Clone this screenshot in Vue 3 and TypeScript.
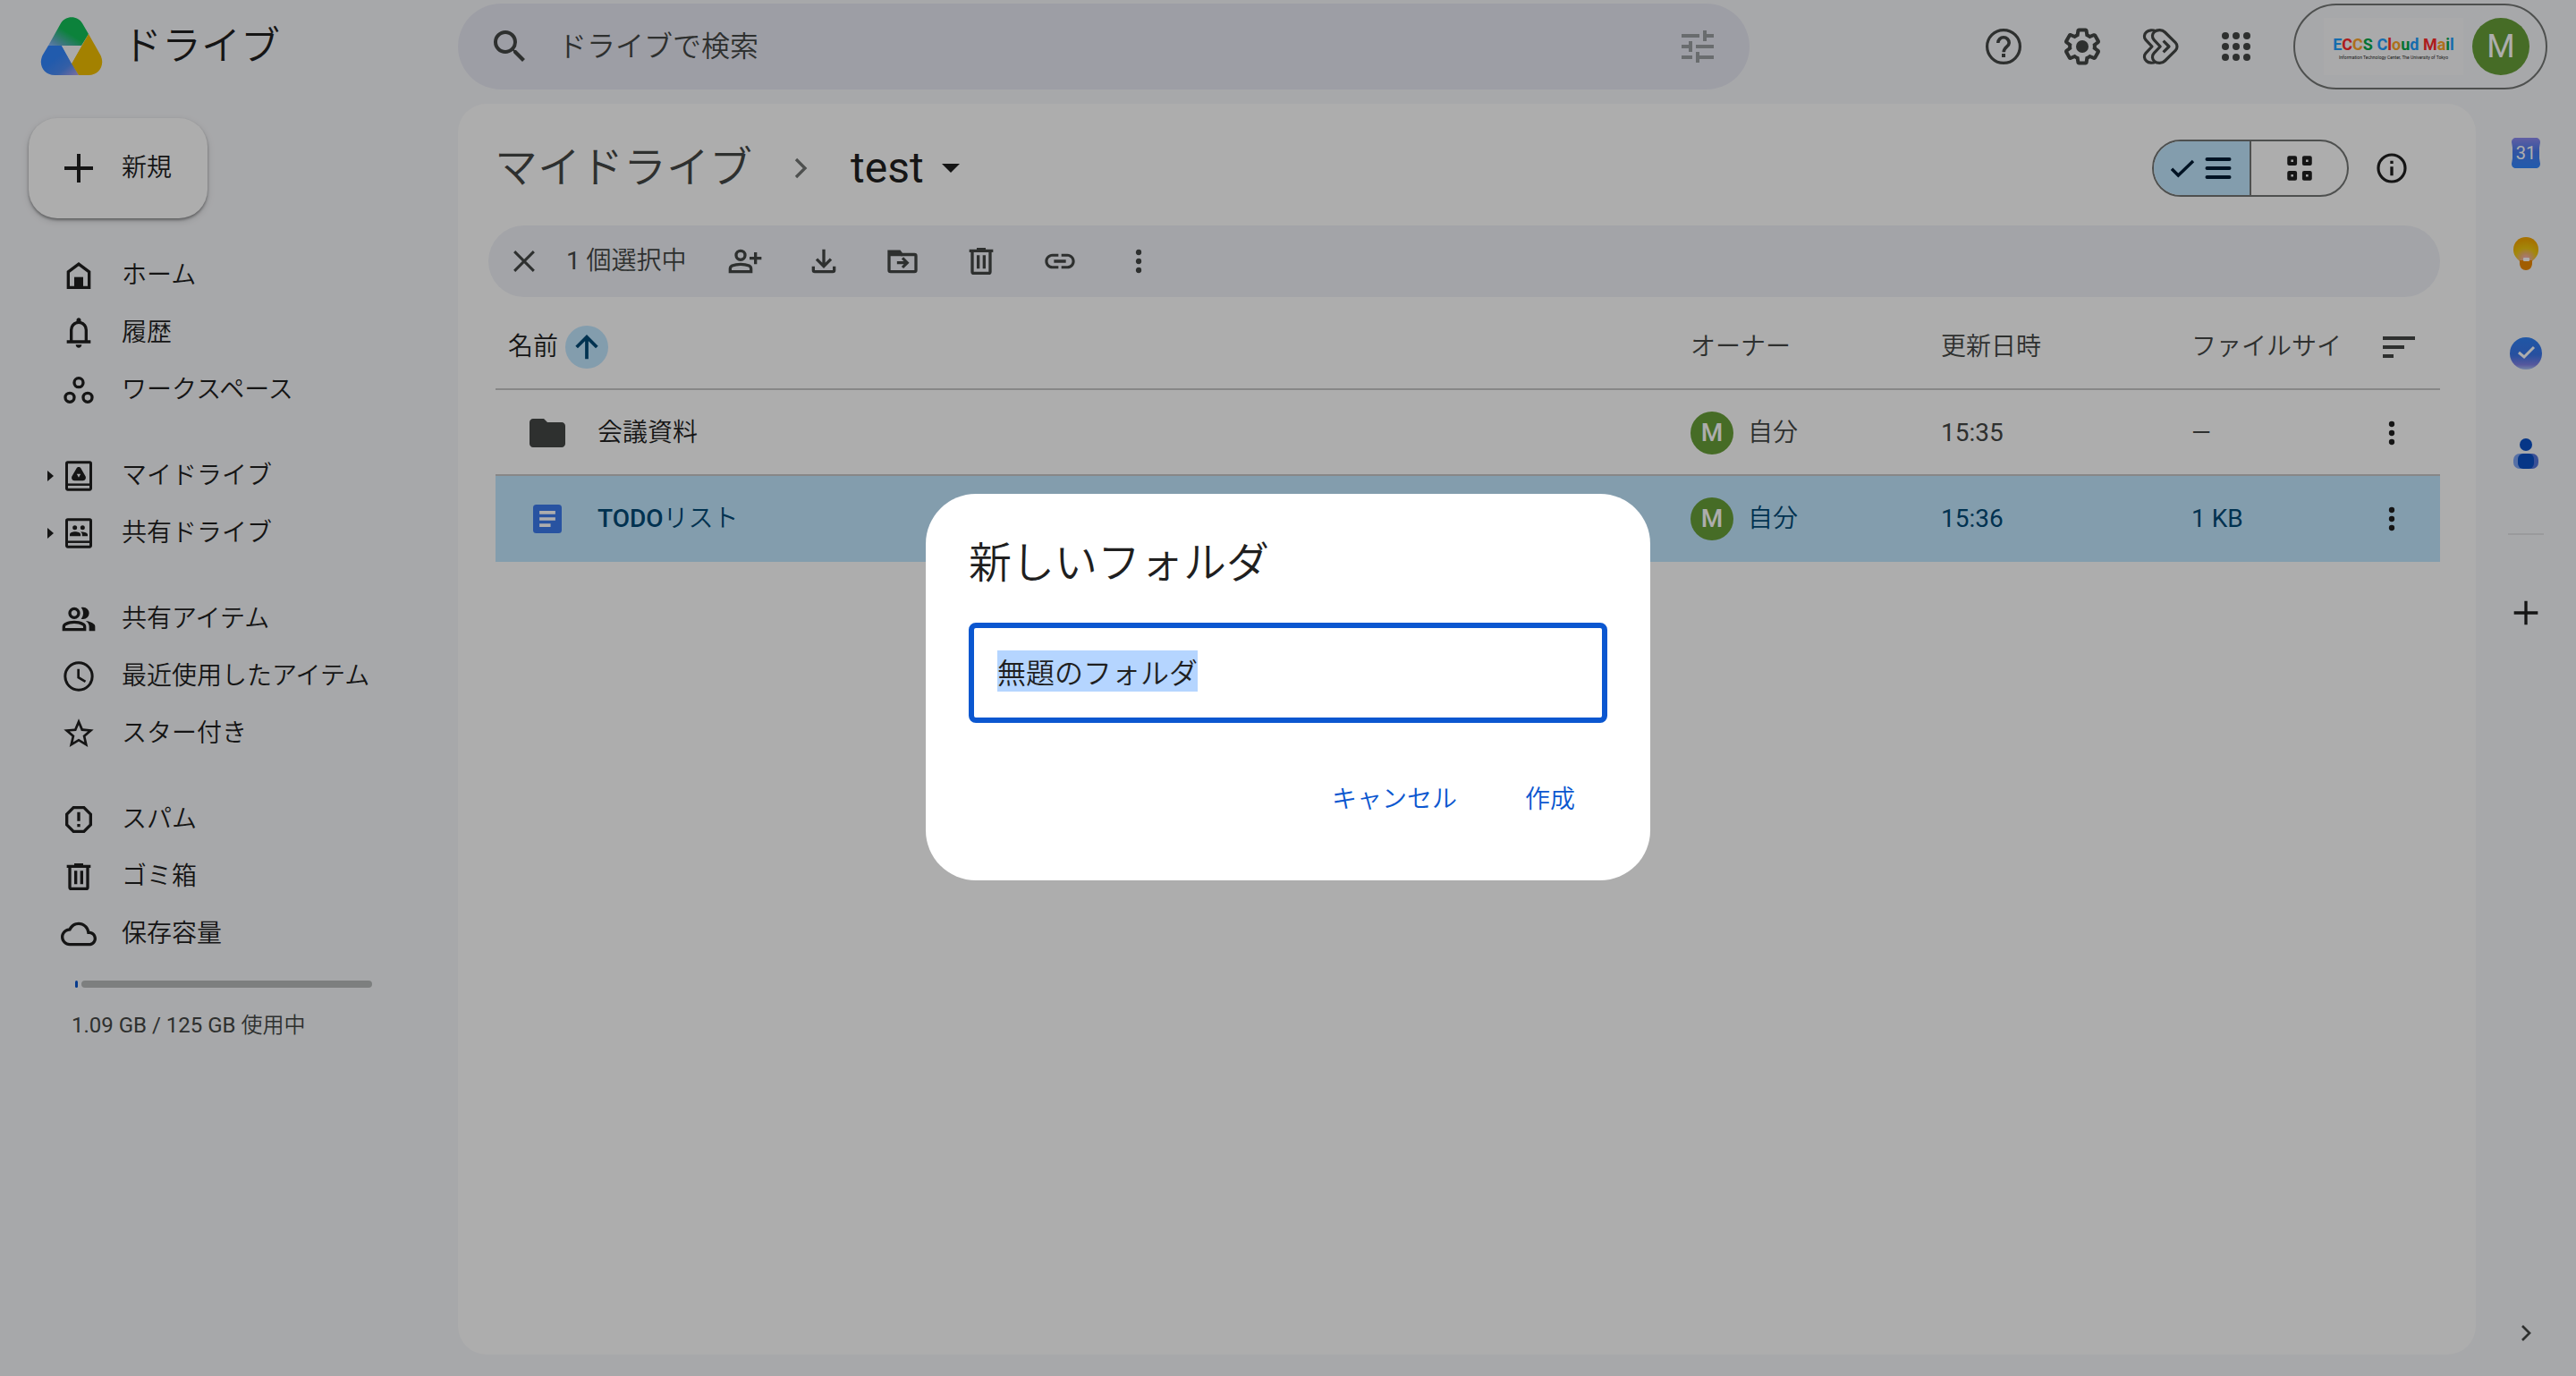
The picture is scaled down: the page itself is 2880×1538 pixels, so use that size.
<script setup lang="ts">
import { onMounted, ref } from 'vue'

interface NavItem {
  label: string
  icon: string
  expandable?: boolean
}

interface FileRow {
  name: string
  kind: 'folder' | 'doc'
  owner: string
  modified: string
  size: string
  selected: boolean
}

const line = 'fill="none" stroke="currentColor"'

const icons: Record<string, string> = {
  plus: '<path d="M12 4v16M4 12h16" fill="none" stroke="currentColor" stroke-width="2"/>',
  home: `<path d="M5 20V9.500l7-5.250 7 5.250V20Z" ${line} stroke-width="2"/><path d="M9 13h6v7H9z"/>`,
  bell: '<path d="M4 19v-2h2v-7q0-2.075 1.250-3.687Q8.500 4.700 10.500 4.200v-.7q0-.625.438-1.062Q11.375 2 12 2t1.063.438q.437.437.437 1.062v.7q2 .5 3.250 2.113Q18 7.925 18 10v7h2v2Zm8 3q-.825 0-1.412-.587Q10 20.825 10 20h4q0 .825-.587 1.413Q12.825 22 12 22Zm-4-5h8v-7q0-1.650-1.175-2.825Q13.650 6 12 6q-1.650 0-2.825 1.175Q8 8.350 8 10Z"/>',
  workspaces: `<g ${line} stroke-width="2"><circle cx="12" cy="7" r="3"/><circle cx="6" cy="17" r="3"/><circle cx="18" cy="17" r="3"/></g>`,
  myDrive: `<rect x="3.900" y="2.900" width="16.200" height="18.200" rx=".8" ${line} stroke-width="1.800"/><path d="M3.500 17.800h17" ${line} stroke-width="1.500"/><path fill-rule="evenodd" d="M10.600 6.800c.6-1.100 2.200-1.100 2.800 0l3.100 5.400c.7 1.300-.1 3-1.600 3H9.100c-1.500 0-2.300-1.700-1.600-3ZM10.700 10.700l1.300 2.400 1.300-2.400Z"/>`,
  sharedDrive: `<rect x="3.900" y="2.900" width="16.200" height="18.200" rx=".8" ${line} stroke-width="1.800"/><path d="M3.500 17.800h17" ${line} stroke-width="1.500"/><circle cx="9.400" cy="8.200" r="1.500"/><circle cx="14.600" cy="8.200" r="1.500"/><path d="M6 13.900v-1c0-1.200 2-1.900 3.600-1.900s3.700.7 3.700 1.900v1ZM14.300 13.900v-1c0-.8-.5-1.400-1.200-1.800 1.900-.3 4.900.4 4.900 1.800v1Z"/>`,
  group: '<path d="M1 20v-2.800q0-.85.438-1.563Q1.875 14.925 2.600 14.550q1.550-.775 3.150-1.163Q7.350 13 9 13t3.250.387q1.600.388 3.150 1.163.725.375 1.163 1.087Q17 16.350 17 17.200V20Zm18 0v-3q0-1.100-.613-2.113-.612-1.012-1.737-1.737 1.275.15 2.400.512 1.125.363 2.100.888.9.5 1.375 1.112Q23 16.275 23 17v3ZM9 12q-1.650 0-2.825-1.175Q5 9.650 5 8q0-1.650 1.175-2.825Q7.350 4 9 4q1.650 0 2.825 1.175Q13 6.350 13 8q0 1.650-1.175 2.825Q10.650 12 9 12Zm10-4q0 1.650-1.175 2.825Q16.650 12 15 12q-.275 0-.7-.062-.425-.063-.7-.138.675-.8 1.037-1.775Q15 9.050 15 8q0-1.050-.363-2.025Q14.275 5 13.600 4.200q.35-.125.7-.163Q14.650 4 15 4q1.650 0 2.825 1.175Q19 6.350 19 8ZM3 18h12v-.8q0-.275-.137-.5-.138-.225-.363-.35-1.350-.675-2.725-1.013Q10.400 15 9 15t-2.775.337Q4.850 15.675 3.500 16.350q-.225.125-.362.35-.138.225-.138.5Zm6-8q.825 0 1.413-.588Q11 8.825 11 8t-.587-1.412Q9.825 6 9 6q-.825 0-1.412.588Q7 7.175 7 8t.588 1.412Q8.175 10 9 10Z"/>',
  clock: `<circle cx="12" cy="12" r="9.100" ${line} stroke-width="1.800"/><path d="M11.800 7v5.700l4.700 2.800" ${line} stroke-width="1.600"/>`,
  star: '<path d="m22 9.240-7.190-.62L12 2 9.190 8.630 2 9.240l5.460 4.730L5.820 21 12 17.270 18.180 21l-1.630-7.030L22 9.240zM12 15.400l-3.760 2.270 1-4.280-3.320-2.880 4.380-.38L12 6.100l1.710 4.040 4.380.38-3.320 2.880 1 4.280L12 15.400z"/>',
  spam: `<path d="M8.500 4h7L20 8.500v7L15.500 20h-7L4 15.500v-7Z" ${line} stroke-width="2"/><path d="M11 7h2v6h-2zM11 15h2v2h-2z"/>`,
  trash: `<path d="M4 4h5V3h6v1h5v2H4z"/><path d="M6 5.500V19c0 .6.400 1 1 1h10c.6 0 1-.4 1-1V5.500" ${line} stroke-width="2"/><path d="M9 8h2v9H9zM13 8h2v9h-2z"/>`,
  cloud: '<path d="M19.350 10.040C18.670 6.590 15.640 4 12 4 9.110 4 6.600 5.640 5.350 8.040 2.340 8.360 0 10.910 0 14c0 3.310 2.690 6 6 6h13c2.760 0 5-2.240 5-5 0-2.640-2.050-4.780-4.650-4.960zM19 18H6c-2.210 0-4-1.790-4-4 0-2.050 1.530-3.760 3.560-3.970l1.070-.11.5-.95C8.080 7.140 9.940 6 12 6c2.620 0 4.880 1.860 5.390 4.430l.3 1.500 1.530.11c1.560.1 2.780 1.410 2.780 2.960 0 1.650-1.350 3-3 3z"/>',
  search: '<path d="M15.500 14h-.79l-.28-.27A6.471 6.471 0 0 0 16 9.500 6.500 6.500 0 1 0 9.500 16c1.610 0 3.090-.59 4.230-1.570l.27.28v.79l5 4.990L20.490 19l-4.990-5zm-6 0C7.010 14 5 11.990 5 9.500S7.010 5 9.500 5 14 7.010 14 9.500 11.990 14 9.500 14z"/>',
  tune: '<path d="M3 17v2h6v-2H3zM3 5v2h10V5H3zm10 16v-2h8v-2h-8v-2h-2v6h2zM7 9v2H3v2h4v2h2V9H7zm14 4v-2H11v2h10zm-6-4h2V7h4V5h-4V3h-2v6z"/>',
  help: `<circle cx="12" cy="12" r="9.200" ${line} stroke-width="1.600"/><path d="M8.900 10a3.100 3.100 0 1 1 6.200 0c0 2-3 2.200-3 5.100" ${line} stroke-width="1.800"/><path d="M11 16h2v2h-2z"/>`,
  settings: '<path d="M13.850 22.250h-3.700c-.74 0-1.360-.54-1.450-1.270l-.27-1.890c-.27-.14-.53-.29-.79-.46l-1.800.72c-.7.26-1.470-.03-1.810-.65L2.200 15.530c-.35-.66-.2-1.440.36-1.880l1.530-1.190c-.01-.15-.02-.3-.02-.46 0-.15.010-.31.020-.46l-1.520-1.190c-.59-.45-.74-1.260-.37-1.880l1.850-3.190c.34-.62 1.110-.9 1.790-.63l1.810.73c.26-.17.52-.32.78-.46l.27-1.910c.09-.7.71-1.250 1.440-1.250h3.700c.74 0 1.360.54 1.450 1.270l.27 1.890c.27.14.53.29.79.46l1.800-.72c.71-.26 1.480.03 1.820.65l1.840 3.180c.36.66.2 1.440-.36 1.880l-1.520 1.190c.01.15.02.3.02.46s-.01.31-.02.46l1.520 1.190c.56.45.72 1.230.37 1.860l-1.860 3.220c-.34.62-1.110.9-1.800.63l-1.800-.72c-.26.17-.52.32-.78.46l-.27 1.910c-.1.68-.72 1.220-1.460 1.220zm-3.230-2h2.760l.37-2.550.53-.22c.44-.18.88-.44 1.340-.78l.45-.34 2.380.96 1.380-2.400-2.030-1.580.07-.56c.03-.26.06-.51.06-.78s-.03-.53-.06-.78l-.07-.56 2.030-1.580-1.390-2.400-2.390.96-.45-.35c-.42-.32-.87-.58-1.330-.77l-.52-.22-.37-2.550h-2.760l-.37 2.550-.53.21c-.44.19-.88.44-1.340.79l-.45.33-2.380-.95-1.390 2.390 2.030 1.580-.07.56a7 7 0 0 0-.06.79c0 .26.020.53.060.78l.07.56-2.030 1.580 1.380 2.400 2.390-.96.45.35c.43.33.86.58 1.330.77l.53.22.38 2.550z"/><circle cx="12" cy="12" r="3.500"/>',
  spark: `<g ${line} stroke-width="1.600" stroke-linejoin="round"><path d="M9 3.400C7.500 2.600 5.200 2.700 3.900 3.900 2.500 5.100 2.300 7 3.500 8.300L7 12l-3.500 3.700c-1.200 1.300-1 3.200.4 4.400 1.300 1.200 3.600 1.300 5.100.5"/><path d="M8.100 8.300C6.800 6.900 7 4.900 8.300 3.800 10 2.400 12.700 2.500 14.200 4l5.900 5.800c1.200 1.200 1.200 3.200 0 4.400L14.200 20c-1.500 1.500-4.200 1.600-5.900.2C7 19.100 6.800 17.100 8.100 15.700L11.600 12Z"/><path d="m13.300 8.800 3.200 3.200-3.200 3.200"/></g>`,
  apps: '<circle cx="6" cy="6" r="2"/><circle cx="12" cy="6" r="2"/><circle cx="18" cy="6" r="2"/><circle cx="6" cy="12" r="2"/><circle cx="12" cy="12" r="2"/><circle cx="18" cy="12" r="2"/><circle cx="6" cy="18" r="2"/><circle cx="12" cy="18" r="2"/><circle cx="18" cy="18" r="2"/>',
  check: `<path d="M3 12.500l5.500 5.500L21 6" ${line} stroke-width="2.600"/>`,
  list: `<path d="M4.500 6h15M4.500 12h15M4.500 18h15" ${line} stroke-width="2.400" stroke-linecap="round"/>`,
  grid: `<g ${line} stroke-width="2.500" stroke-linejoin="round"><path d="M5 5h4v4H5zM15 5h4v4h-4zM5 15h4v4H5zM15 15h4v4h-4z"/></g>`,
  info: `<circle cx="12" cy="12" r="9" ${line} stroke-width="1.900"/><path d="M11 11h2v6h-2zM11 7h2v2h-2z"/>`,
  close: `<path d="m5.500 5.500 13 13M18.500 5.500l-13 13" ${line} stroke-width="1.800"/>`,
  personAdd: `<g ${line} stroke-width="2"><circle cx="9" cy="8" r="3"/><path d="M2 19v-1.900c0-.9.500-1.700 1.300-2.100C5 14.300 7 14 9 14s4 .3 5.700 1c.8.400 1.300 1.200 1.300 2.100V19Z"/><path d="M19 6v8M15 10h8"/></g>`,
  download: `<g ${line} stroke-width="2"><path d="M12 4v11M7.200 10.600l4.800 4.800 4.800-4.800"/><path d="M5 15.500V18c0 .6.400 1 1 1h12c.6 0 1-.4 1-1v-2.500"/></g>`,
  move: `<path d="M3 5.500h7l1.500 2H20c.6 0 1 .4 1 1V18c0 .6-.4 1-1 1H4c-.6 0-1-.4-1-1Z" ${line} stroke-width="2"/><path d="M3 5h6.500L12 8.500H3z"/><path d="M8.300 13h6M12 9.800l3.200 3.200-3.200 3.200" ${line} stroke-width="1.900"/>`,
  link: '<path d="M17 7h-4v1.900h4c1.710 0 3.100 1.390 3.100 3.100s-1.390 3.100-3.100 3.100h-4V17h4c2.760 0 5-2.240 5-5s-2.240-5-5-5zM3.900 12c0-1.710 1.390-3.100 3.100-3.100h4V7H7c-2.760 0-5 2.240-5 5s2.240 5 5 5h4v-1.900H7c-1.710 0-3.100-1.390-3.100-3.100zM8 11h8v2H8z"/>',
  more: '<circle cx="12" cy="6" r="1.900"/><circle cx="12" cy="12" r="1.900"/><circle cx="12" cy="18" r="1.900"/>',
  arrowUp: `<path d="M12 22V3.500M3.500 12 12 3.500l8.500 8.500" ${line} stroke-width="2.800"/>`,
  sort: '<path d="M3 6h18v2H3zM3 11h12v2H3zM3 16h6v2H3z"/>',
  chevron: `<path d="m9 6 6 6-6 6" ${line} stroke-width="2"/>`,
  folder: '<path d="M10 4H4c-1.100 0-2 .9-2 2v12c0 1.100.9 2 2 2h16c1.100 0 2-.9 2-2V8c0-1.100-.9-2-2-2h-8l-2-2z"/>',
  doc: '<rect x="3" y="3" width="18" height="18" rx="2" fill="#3c7bee"/><path d="M7 7h10v2H7zM7 11h10v2H7zM7 15h7v2H7z" fill="#fff"/>',
}

const navGroups: NavItem[][] = [
  [
    { label: 'ホーム', icon: 'home' },
    { label: '履歴', icon: 'bell' },
    { label: 'ワークスペース', icon: 'workspaces' },
  ],
  [
    { label: 'マイドライブ', icon: 'myDrive', expandable: true },
    { label: '共有ドライブ', icon: 'sharedDrive', expandable: true },
  ],
  [
    { label: '共有アイテム', icon: 'group' },
    { label: '最近使用したアイテム', icon: 'clock' },
    { label: 'スター付き', icon: 'star' },
  ],
  [
    { label: 'スパム', icon: 'spam' },
    { label: 'ゴミ箱', icon: 'trash' },
    { label: '保存容量', icon: 'cloud' },
  ],
]

const headerActions = [
  { icon: 'help', label: 'サポート' },
  { icon: 'settings', label: '設定' },
  { icon: 'spark', label: 'Gemini' },
]

const selectionActions = [
  { icon: 'personAdd', label: '共有' },
  { icon: 'download', label: 'ダウンロード' },
  { icon: 'move', label: '移動' },
  { icon: 'trash', label: '削除' },
  { icon: 'link', label: 'リンクをコピー' },
  { icon: 'more', label: 'その他の操作' },
]

const files: FileRow[] = [
  { name: '会議資料', kind: 'folder', owner: '自分', modified: '15:35', size: '—', selected: false },
  { name: 'TODOリスト', kind: 'doc', owner: '自分', modified: '15:36', size: '1 KB', selected: true },
]

const brandLetters = [
  ['E', '#1fa0ff'], ['C', '#ff2a2a'], ['C', '#ffa62a'], ['S', '#00a84a'], [' ', '#000'],
  ['C', '#1fa0ff'], ['l', '#ff2a2a'], ['o', '#ffa62a'], ['u', '#00a84a'], ['d', '#1fa0ff'], [' ', '#000'],
  ['M', '#ff2a2a'], ['a', '#ffa62a'], ['i', '#00a84a'], ['l', '#1fa0ff'],
]

/** Splits a file name into runs so that Latin runs can take their own weight. */
function runs(name: string): { text: string; latin: boolean }[] {
  return (name.match(/[\x20-\x7e]+|[^\x20-\x7e]+/g) ?? []).map((text) => ({
    text,
    latin: /^[\x20-\x7e]/.test(text),
  }))
}

const folderName = ref('無題のフォルダ')
const nameInput = ref<HTMLInputElement | null>(null)

onMounted(() => {
  nameInput.value?.focus()
  nameInput.value?.select()
})
</script>

<template>
  <div class="app">
    <header class="topbar">
      <a class="brand" href="#">
        <svg class="logo" viewBox="0 0 70 66" aria-hidden="true">
          <defs>
            <linearGradient id="lg-green" x1="0" y1="1" x2=".45" y2=".5">
              <stop offset="0" stop-color="#8ab9ff" />
              <stop offset=".3" stop-color="#6aaed0" />
              <stop offset="1" stop-color="#12c058" />
            </linearGradient>
            <linearGradient id="lg-blue" x1=".4" y1=".4" x2="1" y2="1">
              <stop offset="0" stop-color="#3186ff" />
              <stop offset=".5" stop-color="#4d8cf5" />
              <stop offset="1" stop-color="#b9a4ea" />
            </linearGradient>
          </defs>
          <path d="M9 32 23 7c5-9 19-9 24 0l7 12-8 13Z" fill="url(#lg-green)" />
          <path d="M9 32h15l19 33H16C4 65-3 53 3 42Z" fill="url(#lg-blue)" />
          <path d="M54 19 67 42c6 11-1 23-13 23H43l-8-13Z" fill="#f0be00" />
          <path d="M24 32h22L35 52Z" fill="#fbfbfd" />
        </svg>
        <span class="brand-name">ドライブ</span>
      </a>

      <div class="top-main">
        <form class="search" @submit.prevent>
          <svg class="icon-lg" viewBox="0 0 24 24" v-html="icons.search" />
          <input type="search" placeholder="ドライブで検索" aria-label="ドライブで検索" />
          <button type="button" class="bare tune" aria-label="検索オプション">
            <svg class="icon-lg" viewBox="0 0 24 24" v-html="icons.tune" />
          </button>
        </form>
        <div class="top-actions">
          <button v-for="a in headerActions" :key="a.icon" type="button" class="bare" :aria-label="a.label">
            <svg class="icon-lg" viewBox="0 0 24 24" v-html="icons[a.icon]" />
          </button>
          <button type="button" class="bare apps" aria-label="アプリ">
            <svg class="icon-lg" viewBox="0 0 24 24" v-html="icons.apps" />
          </button>
          <button type="button" class="account">
            <span class="org">
              <span class="org-name"><span v-for="(l, i) in brandLetters" :key="i" :style="{ color: l[1] }">{{ l[0] }}</span></span>
              <span class="org-sub">Information Technology Center, The University of Tokyo</span>
            </span>
            <span class="avatar avatar-lg">M</span>
          </button>
        </div>
      </div>
    </header>

    <div class="body">
      <aside class="sidebar">
        <button type="button" class="new-btn">
          <svg class="icon-lg" viewBox="0 0 24 24" v-html="icons.plus" />
          <span>新規</span>
        </button>
        <nav>
          <ul v-for="(group, gi) in navGroups" :key="gi">
            <li v-for="item in group" :key="item.label">
              <a href="#">
                <span class="twisty" :class="{ on: item.expandable }" />
                <svg class="icon" viewBox="0 0 24 24" v-html="icons[item.icon]" />
                <span>{{ item.label }}</span>
              </a>
            </li>
          </ul>
        </nav>
        <div class="quota">
          <div class="meter"><i class="used" /><i class="free" /></div>
          <p><span class="latin">1.09 GB / 125 GB</span> 使用中</p>
        </div>
      </aside>

      <main class="panel">
        <div class="crumb-row">
          <nav class="crumbs" aria-label="パンくずリスト">
            <a href="#">マイドライブ</a>
            <svg class="icon crumb-sep" viewBox="0 0 24 24" v-html="icons.chevron" />
            <button type="button" class="bare current">test<span class="caret" /></button>
          </nav>
          <div class="view">
            <div class="toggle">
              <button type="button" class="bare seg on" aria-label="リスト レイアウト">
                <svg class="icon-sm" viewBox="0 0 24 24" v-html="icons.check" />
                <svg class="icon" viewBox="0 0 24 24" v-html="icons.list" />
              </button>
              <button type="button" class="bare seg" aria-label="グリッド レイアウト">
                <svg class="icon" viewBox="0 0 24 24" v-html="icons.grid" />
              </button>
            </div>
            <button type="button" class="bare info" aria-label="詳細を表示">
              <svg class="icon" viewBox="0 0 24 24" v-html="icons.info" />
            </button>
          </div>
        </div>

        <div class="selection" role="toolbar" aria-label="選択項目の操作">
          <button type="button" class="bare" aria-label="選択を解除">
            <svg class="icon" viewBox="0 0 24 24" v-html="icons.close" />
          </button>
          <span class="count"><span class="latin">1</span> 個選択中</span>
          <button v-for="a in selectionActions" :key="a.icon" type="button" class="bare action" :aria-label="a.label">
            <svg class="icon" viewBox="0 0 24 24" v-html="icons[a.icon]" />
          </button>
        </div>

        <table class="files">
          <colgroup>
            <col /><col class="c-mid" /><col class="c-mid" /><col class="c-size" /><col class="c-act" />
          </colgroup>
          <thead>
            <tr>
              <th class="h-name">
                <span class="cell">
                  名前
                  <button type="button" class="bare sort-dir" aria-label="昇順">
                    <svg class="icon-sm" viewBox="0 0 24 24" v-html="icons.arrowUp" />
                  </button>
                </span>
              </th>
              <th>オーナー</th>
              <th>更新日時</th>
              <th>ファイルサイ</th>
              <th class="h-sort">
                <button type="button" class="bare" aria-label="並べ替え">
                  <svg class="icon-lg" viewBox="0 0 24 24" v-html="icons.sort" />
                </button>
              </th>
            </tr>
          </thead>
          <tbody>
            <tr v-for="f in files" :key="f.name" :class="{ selected: f.selected }">
              <td class="t-name">
                <span class="cell">
                  <svg v-if="f.kind === 'folder'" class="icon-lg folder" viewBox="0 0 24 24" v-html="icons.folder" />
                  <svg v-else class="icon-doc" viewBox="3 3 18 18" v-html="icons.doc" />
                  <span><span v-for="r in runs(f.name)" :key="r.text" :class="{ strong: r.latin }">{{ r.text }}</span></span>
                </span>
              </td>
              <td>
                <span class="cell owner"><span class="avatar">M</span>{{ f.owner }}</span>
              </td>
              <td class="latin">{{ f.modified }}</td>
              <td class="latin">{{ f.size }}</td>
              <td class="t-more">
                <button type="button" class="bare" aria-label="その他の操作">
                  <svg class="icon" viewBox="0 0 24 24" v-html="icons.more" />
                </button>
              </td>
            </tr>
          </tbody>
        </table>
      </main>

      <aside class="rail">
        <button type="button" class="bare" aria-label="カレンダー">
          <svg class="icon" viewBox="0 0 40 40">
            <defs>
              <linearGradient id="cal" x1="0" y1="0" x2="0" y2="1">
                <stop offset="0" stop-color="#8f8cf0" />
                <stop offset=".45" stop-color="#4a7df0" />
                <stop offset="1" stop-color="#3186ff" />
              </linearGradient>
            </defs>
            <path d="M9 3h22c3 0 5 2 5 5l-1 6v12l1 6c0 3-2 5-5 5H9c-3 0-5-2-5-5l1-6V14L4 8c0-3 2-5 5-5Z" fill="url(#cal)" />
            <text x="20" y="27" text-anchor="middle" font-family="Roboto" font-size="20" font-weight="400" fill="#fff">31</text>
          </svg>
        </button>
        <button type="button" class="bare" aria-label="Keep">
          <svg class="icon" viewBox="0 0 40 40">
            <defs>
              <radialGradient id="keep" cx=".5" cy=".9" r=".8">
                <stop offset="0" stop-color="#ffb0c8" />
                <stop offset=".3" stop-color="#f0b76a" />
                <stop offset=".55" stop-color="#f0c810" />
                <stop offset="1" stop-color="#f5a800" />
              </radialGradient>
            </defs>
            <path d="M20 2c8 0 14 6 14 14 0 6-3 9-7 13H13c-4-4-7-7-7-13C6 8 12 2 20 2Z" fill="url(#keep)" />
            <path d="M13 28h14v3c0 5-3 8-7 8s-7-3-7-8Z" fill="#ee8a00" />
            <rect x="17" y="25" width="7" height="4" rx="1" fill="#fff" />
          </svg>
        </button>
        <button type="button" class="bare" aria-label="ToDo リスト">
          <svg class="icon" viewBox="0 0 40 40">
            <defs>
              <linearGradient id="task" x1="0" y1="0" x2="0" y2="1">
                <stop offset="0" stop-color="#2f80f5" />
                <stop offset=".55" stop-color="#3a76ea" />
                <stop offset=".85" stop-color="#7f82e8" />
                <stop offset="1" stop-color="#a9c4f5" />
              </linearGradient>
            </defs>
            <circle cx="20" cy="20" r="18" fill="url(#task)" />
            <path d="m12 19 6 5 11-11" fill="none" stroke="#fff" stroke-width="3" />
          </svg>
        </button>
        <button type="button" class="bare" aria-label="連絡先">
          <svg class="icon" viewBox="0 0 40 40">
            <rect x="6" y="20" width="20" height="17" rx="7" fill="#7fa6f5" />
            <rect x="16" y="20" width="18" height="17" rx="7" fill="#5576dd" />
            <rect x="11" y="20" width="18" height="17" rx="6" fill="#0a50c8" />
            <circle cx="20" cy="10" r="7" fill="#0a50c8" />
          </svg>
        </button>
        <hr />
        <button type="button" class="bare add" aria-label="アドオンを取得">
          <svg class="icon" viewBox="0 0 24 24" v-html="icons.plus" />
        </button>
        <button type="button" class="bare hide" aria-label="サイドパネルを非表示">
          <svg class="icon-sm" viewBox="0 0 24 24" v-html="icons.chevron" />
        </button>
      </aside>
    </div>

    <div class="scrim">
      <form class="dialog" role="dialog" aria-modal="true" aria-labelledby="dialog-title" @submit.prevent>
        <h1 id="dialog-title">新しいフォルダ</h1>
        <input ref="nameInput" v-model="folderName" type="text" aria-labelledby="dialog-title" />
        <div class="dialog-actions">
          <button type="button">キャンセル</button>
          <button type="submit">作成</button>
        </div>
      </form>
    </div>
  </div>
</template>

<style>
body {
  margin: 0;
  background: #f7f8fb;
}
</style>

<style scoped>
.app,
.app button,
.app input {
  font-family: Roboto, 'Noto Sans CJK JP', sans-serif;
  font-weight: 350;
}
.app button {
  line-height: 40px;
}
.app {
  display: flex;
  flex-direction: column;
  min-height: 100vh;
  font-size: 28px;
  line-height: 40px;
  color: #1f1f1f;
  background: #f7f8fb;
}
.app *,
.app {
  box-sizing: border-box;
}
a {
  color: inherit;
  text-decoration: none;
}
svg {
  display: block;
  flex: none;
  fill: currentColor;
}
.icon-sm {
  width: 32px;
  height: 32px;
}
.icon-doc {
  width: 32px;
  height: 32px;
}
.icon {
  width: 40px;
  height: 40px;
}
.icon-lg {
  width: 48px;
  height: 48px;
}
.bare {
  display: flex;
  align-items: center;
  justify-content: center;
  padding: 0;
  border: 0;
  background: none;
  color: inherit;
  font-size: inherit;
}
.latin {
  font-weight: 400;
}
.strong {
  font-weight: 500;
}

/* Top bar */
.topbar {
  display: flex;
  height: 116px;
  padding: 4px 32px 16px 0;
}
.brand {
  display: flex;
  flex: none;
  align-items: center;
  gap: 22px;
  width: 512px;
  padding-left: 45px;
}
.logo {
  width: 70px;
  height: 66px;
}
.brand-name {
  font-size: 44px;
  line-height: 60px;
}
.top-main {
  display: flex;
  flex: 1;
  align-items: center;
  justify-content: space-between;
  gap: 40px;
}
.search {
  display: flex;
  flex: 0 1 1444px;
  align-items: center;
  height: 96px;
  padding: 0 34px;
  border-radius: 48px;
  background: #e8e9f4;
  color: #444746;
}
.search input {
  flex: 1;
  min-width: 0;
  height: 64px;
  padding: 0 30px;
  border: 0;
  outline: 0;
  background: none;
  font-size: 32px;
}
.search input::placeholder {
  color: #444746;
}
.tune {
  color: #9b9fa2;
}
.top-actions {
  display: flex;
  align-items: center;
  gap: 40px;
  color: #444746;
}
.apps {
  margin-left: -4px;
}
.account {
  display: flex;
  align-items: center;
  justify-content: flex-end;
  gap: 10px;
  width: 284px;
  height: 96px;
  padding: 0 18px;
  border: 2px solid #747775;
  border-radius: 48px;
  background: none;
}
.org {
  display: flex;
  flex-direction: column;
  align-items: center;
  justify-content: center;
  width: 156px;
  height: 64px;
  padding-top: 4px;
  background: #fbfbfd;
}
.org-name {
  font-size: 18px;
  font-weight: 700;
  line-height: 20px;
  white-space: pre;
}
.org-name span {
  font-weight: 700;
}
.org-sub {
  font-size: 5px;
  font-weight: 400;
  line-height: 8px;
  color: #1f1f1f;
  white-space: nowrap;
}
.avatar {
  display: flex;
  flex: none;
  align-items: center;
  justify-content: center;
  width: 48px;
  height: 48px;
  border-radius: 50%;
  background: #689f38;
  color: #fff;
  font-size: 28px;
  font-weight: 500;
}
.avatar-lg {
  width: 64px;
  height: 64px;
  font-size: 36px;
  font-weight: 400;
}

/* Body columns */
.body {
  display: flex;
  flex: 1;
  padding-bottom: 24px;
}
.sidebar {
  flex: none;
  width: 512px;
  padding-top: 16px;
}
.new-btn {
  display: flex;
  align-items: center;
  gap: 24px;
  height: 112px;
  margin-left: 32px;
  padding: 0 40px 0 32px;
  border: 0;
  border-radius: 32px;
  background: #fff;
  box-shadow: 0 2px 3px rgba(0, 0, 0, 0.35), 0 3px 8px rgba(0, 0, 0, 0.15);
  color: #1f1f1f;
  font-size: 28px;
}
.sidebar ul {
  margin: 0;
  padding: 32px 0 0;
  list-style: none;
}
.sidebar li a {
  display: flex;
  align-items: center;
  height: 64px;
  padding-left: 53px;
}
.sidebar li .icon {
  margin-right: 28px;
}
.twisty {
  width: 15px;
}
.twisty.on::before {
  content: '';
  display: block;
  width: 0;
  border: 6px solid transparent;
  border-left: 7px solid #1f1f1f;
  border-right: 0;
}
.quota {
  padding: 20px 96px 0 80px;
}
.meter {
  display: flex;
  gap: 4px;
  padding-left: 4px;
}
.meter i {
  height: 8px;
  border-radius: 4px;
}
.used {
  width: 3px;
  background: #0b57d0;
}
.free {
  flex: 1;
  background: #b8bcbb;
}
.quota p {
  margin: 22px 0 0;
  font-size: 24px;
  color: #444746;
}

/* File panel */
.panel {
  flex: 1;
  min-width: 0;
  padding: 8px 40px 0 34px;
  border-radius: 32px;
  background: #fff;
}
.crumb-row {
  display: flex;
  align-items: center;
  justify-content: space-between;
  height: 128px;
}
.crumbs {
  display: flex;
  align-items: center;
  padding-left: 7px;
  font-size: 48px;
  line-height: 64px;
}
.crumbs a {
  color: #444746;
}
.crumb-sep {
  margin: 0 36px 0 34px;
  color: #747775;
}
.crumbs .current {
  gap: 20px;
  font-weight: 400;
  line-height: 64px;
}
.caret {
  border: 10px solid transparent;
  border-top-color: #1f1f1f;
  border-bottom: 0;
}
.view {
  display: flex;
  align-items: center;
  gap: 28px;
  padding-right: 34px;
}
.toggle {
  display: flex;
  width: 220px;
  height: 64px;
  overflow: hidden;
  border: 2px solid #747775;
  border-radius: 32px;
}
.seg {
  flex: 1 0 0;
}
.seg.on {
  gap: 4px;
  border-right: 2px solid #747775;
  background: #c2e7ff;
  color: #001d35;
}
.selection {
  display: flex;
  align-items: center;
  height: 80px;
  padding-left: 20px;
  border-radius: 40px;
  background: #f0f2f8;
  color: #444746;
}
.count {
  width: 183px;
  padding-left: 27px;
  white-space: nowrap;
}
.action {
  width: 88px;
}

.files {
  width: calc(100% - 8px);
  margin: 8px 0 0 8px;
  border-collapse: separate;
  border-spacing: 0;
  table-layout: fixed;
}
.c-mid {
  width: 280px;
}
.c-size {
  width: 170px;
}
.c-act {
  width: 108px;
}
.files th,
.files td {
  height: 96px;
  padding: 2px 0 0;
  border-bottom: 2px solid #c7c7c7;
  color: #444746;
  text-align: left;
  white-space: nowrap;
}
.files th {
  font-weight: 350;
}
.files .h-name {
  padding-left: 14px;
  color: #1f1f1f;
}
.files .h-sort {
  padding-left: 38px;
}
.files .t-more {
  padding-left: 34px;
  color: #1f1f1f;
}
.files .t-name {
  padding-left: 34px;
  color: #1f1f1f;
}
.cell {
  display: flex;
  align-items: center;
}
.sort-dir {
  width: 48px;
  height: 48px;
  margin-left: 8px;
  border-radius: 50%;
  background: #c2e7ff;
  color: #004a77;
}
.folder {
  margin-right: 32px;
  color: #444746;
}
.icon-doc {
  margin: 0 40px 0 8px;
}
.owner {
  gap: 16px;
}
.files .selected td {
  border-bottom-color: #c2e7ff;
  background: #c2e7ff;
  color: #004a77;
}
.files .selected .t-more {
  color: #1f1f1f;
}

/* Right rail */
.rail {
  display: flex;
  flex: none;
  flex-direction: column;
  align-items: center;
  width: 112px;
  padding-top: 35px;
}
.rail button {
  margin-bottom: 72px;
}
.rail hr {
  width: 40px;
  margin: -3px 0 67px;
  border: 0;
  border-top: 2px solid #e4e4e6;
}
.rail .hide {
  margin: auto 0 8px;
  color: #444746;
}

/* Modal */
.scrim {
  position: fixed;
  inset: 0;
  display: flex;
  align-items: center;
  justify-content: center;
  padding-bottom: 2px;
  background: rgba(0, 0, 0, 0.32);
}
.dialog {
  width: 810px;
  padding: 48px 48px 54px;
  border-radius: 56px;
  background: #fff;
}
.dialog h1 {
  margin: 0 0 36px;
  font-size: 48px;
  font-weight: 350;
  line-height: 60px;
}
.dialog input {
  display: block;
  width: 100%;
  height: 112px;
  padding: 0 26px 4px;
  border: 6px solid #0b57d0;
  border-radius: 8px;
  outline: 0;
  background: #fff;
  color: #1f1f1f;
  font-size: 32px;
  line-height: 50px;
}
.dialog input::selection {
  background: #b5d5ff;
  color: #1f1f1f;
}
.dialog-actions {
  display: flex;
  justify-content: flex-end;
  gap: 4px;
  margin-top: 50px;
}
.dialog-actions button {
  height: 72px;
  padding: 0 36px;
  border: 0;
  border-radius: 36px;
  background: none;
  color: #0b57d0;
  font-size: 28px;
}
</style>
